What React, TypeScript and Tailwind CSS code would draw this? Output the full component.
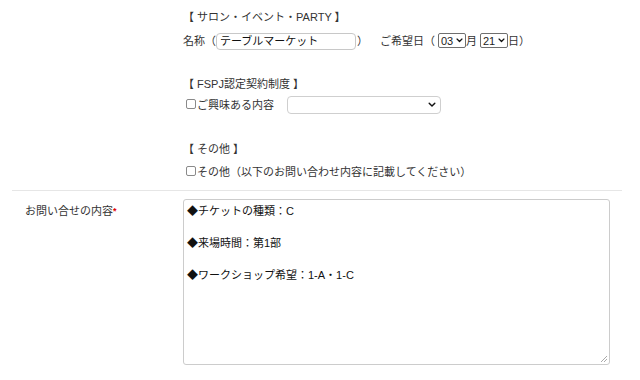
import React from "react";

function Chevron({ size = 8 }: { size?: number }) {
  return (
    <svg width={size} height={size * 0.7} viewBox="0 0 10 7" className="shrink-0">
      <path d="M1.5 1.5 L5 5 L8.5 1.5" fill="none" stroke="#111" strokeWidth="1.8" strokeLinecap="round" strokeLinejoin="round" />
    </svg>
  );
}

function Checkbox() {
  return <span className="inline-block w-[10px] h-[10px] border border-[#8a8a8a] rounded-[2px] bg-white shrink-0" />;
}

function SmallSelect({ value }: { value: string }) {
  return (
    <span className="inline-flex items-center h-[15px] w-[28px] border border-[#6f6f6f] rounded-[2px] pl-[2px] pr-[2px] justify-between bg-white">
      <span className="text-[11px] leading-[12px] text-[#222]">{value}</span>
      <Chevron size={7} />
    </span>
  );
}

export default function App() {
  return (
    <div className="w-[640px] h-[380px] bg-white overflow-hidden text-[#333] text-[11px] font-['Liberation_Sans','Noto_Sans_CJK_JP',sans-serif]">
      <div className="pl-[183px] pt-[9px] flex flex-col">
        <div className="leading-[16px] h-[16px]">【 サロン・イベント・PARTY 】</div>
        <div className="mt-[7px] h-[18px] flex items-center">
          <span>名称（</span>
          <span className="inline-flex items-center w-[140px] h-[17px] border border-[#c8c8c8] rounded-[4px] px-[3px] text-[#111] bg-white">
            テーブルマーケット
          </span>
          <span className="ml-[1px]">）</span>
          <span className="ml-[12px]">ご希望日</span>
          <span>（</span>
          <span className="ml-[3px]">
            <SmallSelect value="03" />
          </span>
          <span>月</span>
          <span className="ml-[3px]">
            <SmallSelect value="21" />
          </span>
          <span>日）</span>
        </div>
        <div className="mt-[26px] leading-[16px] h-[16px]">【 FSPJ認定契約制度 】</div>
        <div className="mt-[4px] h-[18px] flex items-center">
          <span className="ml-[3px]"><Checkbox /></span>
          <span className="ml-[1px]">ご興味ある内容</span>
          <span className="ml-[13px] inline-flex items-center justify-end w-[154px] h-[18px] border border-[#cfcfcf] rounded-[4px] pr-[4px] bg-white">
            <Chevron size={8} />
          </span>
        </div>
        <div className="mt-[27px] leading-[16px] h-[16px]">【 その他 】</div>
        <div className="mt-[6px] h-[18px] flex items-center">
          <span className="ml-[3px]"><Checkbox /></span>
          <span className="ml-[1px]">その他（以下のお問い合わせ内容に記載してください）</span>
        </div>
      </div>
      <div className="mt-[9px] ml-[12px] w-[610px] border-t border-[#e6e6e6]" />
      <div className="flex pt-[8px]">
        <div className="w-[183px] pl-[25px] pt-[4px] leading-[16px]">
          お問い合せの内容<span className="text-[#e00000] text-[9px] font-bold align-top">*</span>
        </div>
        <div className="relative w-[427px] h-[166px] border border-[#cccccc] rounded-[3px] px-[3px] pt-[3px] text-[#111] leading-[16px] bg-white">
          <div>◆チケットの種類：C</div>
          <div>&nbsp;</div>
          <div>◆来場時間：第1部</div>
          <div>&nbsp;</div>
          <div>◆ワークショップ希望：1-A・1-C</div>
          <svg width="8" height="8" viewBox="0 0 8 8" className="absolute right-[1px] bottom-[1px]">
            <path d="M7 1 L1 7 M7 4 L4 7" stroke="#aaa" strokeWidth="1" />
          </svg>
        </div>
      </div>
    </div>
  );
}
